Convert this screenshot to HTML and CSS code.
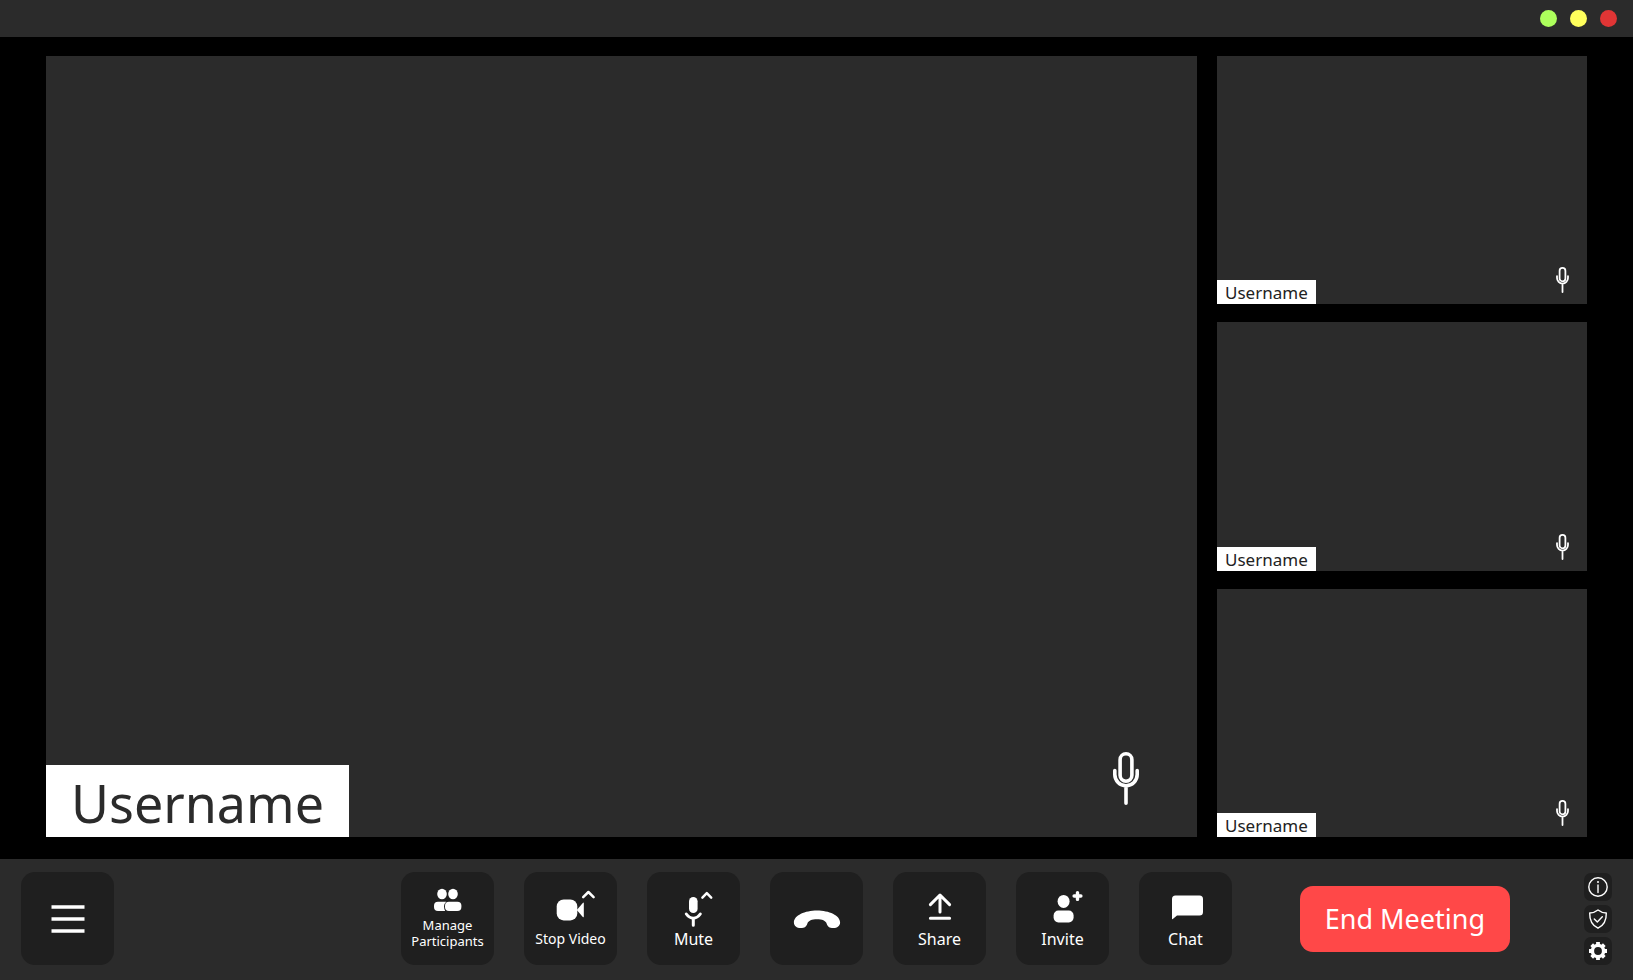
FILE: index.html
```html
<!DOCTYPE html>
<html lang="en">
<head>
    <meta charset="UTF-8">
    <meta name="viewport" content="width=device-width, initial-scale=1.0">
    <title>Meeting</title>
    <link rel="stylesheet" href="styles.css">
</head>
<body>
    <!-- microphone outline shared by every video tile -->
    <svg class="defs" aria-hidden="true">
        <symbol id="mic" viewBox="0 0 26 53">
            <g fill="none" stroke="#fff" stroke-width="3.6" stroke-linecap="round">
                <rect x="7.1" y="1.8" width="11.8" height="27.4" rx="5.9"/>
                <path d="M1.8 18.5v4a11.2 11.2 0 0 0 22.4 0v-4M13 34v17.2"/>
            </g>
        </symbol>
    </svg>

    <header class="titlebar">
        <button class="dot green" aria-label="Minimize"></button>
        <button class="dot yellow" aria-label="Maximize"></button>
        <button class="dot red" aria-label="Close"></button>
    </header>

    <main class="stage">
        <section class="tile speaker">
            <span class="name">Username</span>
            <svg class="mic"><use href="#mic"/></svg>
        </section>
        <div class="side">
            <section class="tile">
                <span class="name">Username</span>
                <svg class="mic"><use href="#mic"/></svg>
            </section>
            <section class="tile">
                <span class="name">Username</span>
                <svg class="mic"><use href="#mic"/></svg>
            </section>
            <section class="tile">
                <span class="name">Username</span>
                <svg class="mic"><use href="#mic"/></svg>
            </section>
        </div>
    </main>

    <footer class="toolbar">
        <button class="tool menu" aria-label="Menu">
            <svg class="icon" viewBox="0 0 60 44"><path d="M13.5 10h33M13.5 22h33M13.5 34h33" fill="none" stroke="#fff" stroke-width="3.4"/></svg>
        </button>

        <div class="tools">
            <button class="tool small">
                <svg class="icon" viewBox="0 0 60 44">
                    <ellipse cx="24" cy="21" rx="4.8" ry="5.2"/>
                    <ellipse cx="35" cy="21" rx="4.8" ry="5.2"/>
                    <path d="M20 28.7h8.2q-2.2 2-2.2 4.5t1.2 4.8H20a4 4 0 0 1-4-4v-1.3a4 4 0 0 1 4-4z"/>
                    <rect x="27" y="28.7" width="16.4" height="9.3" rx="4"/>
                </svg>
                <span>Manage<br>Participants</span>
            </button>
            <button class="tool medium">
                <svg class="icon" viewBox="0 0 60 44">
                    <rect x="15.7" y="14.4" width="20.6" height="21" rx="7"/>
                    <path d="M35.8 24.9l6-7q1-.8 1 .4v13.2q0 1.200-1 .4z"/>
                    <path class="line thin" d="M42.200 12.200l5.200-5.200 5.200 5.200"/>
                </svg>
                <span>Stop Video</span>
            </button>
            <button class="tool">
                <svg class="icon" viewBox="0 0 60 44">
                    <rect x="25" y="12" width="8.6" height="16" rx="4.3"/>
                    <path class="line" d="M22.3 29q3 4.2 7 4.2t7-4.2M29.3 33.2v7"/>
                    <path class="line thin" d="M38.4 12.6l4.400-4.400 4.400 4.400"/>
                </svg>
                <span>Mute</span>
            </button>
            <button class="tool call" aria-label="Hang up">
                <svg class="icon" viewBox="0 0 60 44">
                    <path d="M6.9 25.5C6.9 18.5 18 13.6 30 13.6s23.1 4.9 23.1 11.9c0 3.4-2.9 5.6-6.7 5.6-4.2 0-5.8-1.9-6.7-4.4-1-3-4.6-4.4-9.7-4.4s-8.7 1.4-9.7 4.4c-.9 2.5-2.5 4.4-6.7 4.4-3.8 0-6.7-2.2-6.7-5.6z"/>
                </svg>
            </button>
            <button class="tool">
                <svg class="icon" viewBox="0 0 60 44">
                    <path class="line" d="M20.4 19.6L30 10l9.6 9.6M30 10.5V27M20.4 33.2h19.2"/>
                </svg>
                <span>Share</span>
            </button>
            <button class="tool">
                <svg class="icon" viewBox="0 0 60 44">
                    <ellipse cx="30.6" cy="16.4" rx="6" ry="6.5"/>
                    <rect x="20.6" y="25.6" width="20" height="11.8" rx="4.8"/>
                    <path class="line plus" d="M44.5 7.6v6.8M41.1 11h6.8"/>
                </svg>
                <span>Invite</span>
            </button>
            <button class="tool">
                <svg class="icon" viewBox="0 0 60 44">
                    <path d="M19.5 10.500h24a3.500 3.500 0 0 1 3.500 3.500v13a3.500 3.500 0 0 1-3.500 3.500H21l-4.200 3.600q-.8.5-.8-.5V14a3.500 3.500 0 0 1 3.500-3.500z"/>
                </svg>
                <span>Chat</span>
            </button>
        </div>

        <div class="right">
            <button class="end">End Meeting</button>
            <div class="options">
                <button class="option" aria-label="Information">
                    <svg viewBox="0 0 28 28"><g class="outline"><circle cx="14" cy="14" r="9.200"/><path d="M14 12v7.500"/></g><circle cx="14" cy="9" r="1"/></svg>
                </button>
                <button class="option" aria-label="Security">
                    <svg viewBox="0 0 28 28"><path class="outline" d="M14 5q3.500 2.800 8.300 3c.2 7-2 12.200-8.300 15.200C7.700 20.200 5.500 15 5.700 8Q10.500 7.800 14 5zM10.300 14l3 3 5-5.200"/></svg>
                </button>
                <button class="option" aria-label="Settings">
                    <svg viewBox="0 0 28 28">
                        <circle cx="14" cy="14" r="5.600" fill="none" stroke="#fff" stroke-width="3.400"/>
                        <g fill="none" stroke="#fff" stroke-width="3.800">
                            <path d="M14 5v3.400M14 19.600V23M5 14h3.400M19.600 14H23"/>
                            <path d="M7.700 7.700l2.400 2.400M17.900 17.900l2.400 2.400M7.700 20.300l2.400-2.400M17.900 10.100l2.400-2.400"/>
                        </g>
                    </svg>
                </button>
            </div>
        </div>
    </footer>
</body>
</html>
```
FILE: styles.css
```css
*{
    margin: 0px;
    padding: 0px;
    box-sizing: border-box;
}
body{
    display: flex;
    flex-direction: column;
    min-height: 100vh;
    background: #000;
    color: #fff;
    font-family: "Noto Sans", "Open Sans", sans-serif;
}
button{
    border: none;
    color: inherit;
    font-family: inherit;
    cursor: pointer;
}
svg{
    display: block;
    fill: #fff;
}
.defs{
    display: none;
}

/* window bar */
.titlebar{
    display: flex;
    align-items: center;
    justify-content: flex-end;
    gap: 13px;
    height: 37px;
    padding: 0px 16px;
    background: #2b2b2b;
}
.dot{
    width: 17px;
    height: 17px;
    border-radius: 50%;
}
.green{
    background: #adff5c;
}
.yellow{
    background: #ffff5c;
}
.red{
    background: #e03535;
}

/* video tiles */
.stage{
    flex: 1;
    display: grid;
    grid-template-columns: 28fr 9fr;
    gap: 20px;
    padding: 19px 46px 22px;
}
.side{
    display: flex;
    flex-direction: column;
    gap: 18px;
}
.tile{
    flex: 1;
    display: flex;
    align-items: flex-end;
    justify-content: space-between;
    background: #2b2b2b;
}
.name{
    padding: 2px 8px 0px;
    background: #fff;
    color: #222;
    font-size: 17px;
    line-height: 22px;
}
.mic{
    width: 13px;
    height: 26px;
    margin: 0px 18px 11px 0px;
}
.speaker .name{
    padding: 4px 25px 0px;
    color: #2b2b2b;
    font-size: 52px;
    line-height: 68px;
}
.speaker .mic{
    width: 26px;
    height: 53px;
    margin: 0px 58px 32px 0px;
}

/* bottom toolbar */
.toolbar{
    display: grid;
    grid-template-columns: 1fr auto 1fr;
    align-items: center;
    padding: 13px 21px 15px;
    background: #2b2b2b;
}
.tools{
    display: flex;
    gap: 30px;
}
.tool{
    display: flex;
    flex-direction: column;
    align-items: center;
    justify-content: flex-end;
    width: 93px;
    height: 93px;
    padding-bottom: 16px;
    border-radius: 14px;
    background: #1f1f1f;
    font-size: 16px;
    line-height: 20px;
}
.medium{
    font-size: 14px;
}
.small{
    font-size: 13px;
    line-height: 16px;
}
.menu, .call{
    justify-content: center;
    padding: 0px;
}
.icon{
    width: 60px;
    height: 44px;
    flex-shrink: 0;
}
.line{
    fill: none;
    stroke: #fff;
    stroke-width: 3px;
    stroke-linecap: round;
    stroke-linejoin: round;
}
.thin{
    stroke-width: 2.5px;
}
.plus{
    stroke-width: 3.4px;
}
.right{
    display: flex;
    align-items: center;
    justify-content: flex-end;
    gap: 74px;
}
.end{
    padding: 0px 25px;
    border-radius: 13px;
    background: #ff4848;
    font-size: 27px;
    line-height: 66px;
    white-space: nowrap;
}
.options{
    display: flex;
    flex-direction: column;
    gap: 4px;
}
.option{
    width: 28px;
    height: 28px;
    border-radius: 7px;
    background: #1f1f1f;
}
.outline{
    fill: none;
    stroke: #fff;
    stroke-width: 1.4px;
    stroke-linecap: round;
    stroke-linejoin: round;
}
```
